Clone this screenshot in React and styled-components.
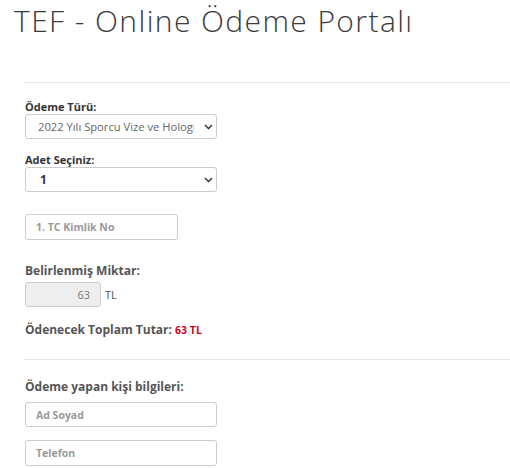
import React from "react";
import styled, { createGlobalStyle } from "styled-components";

const GlobalStyle = createGlobalStyle`
  body {
    margin: 0;
    background: #fff;
    font-family: "Open Sans", "Liberation Sans", sans-serif;
    color: #555;
  }
`;

const ChevronIcon = () => (
  <svg width="9" height="6" viewBox="0 0 9 6">
    <path d="M1 1l3.5 3.5L8 1" fill="none" stroke="#444" strokeWidth="1.6" />
  </svg>
);

const App = () => {
  return (
    <Page>
      <GlobalStyle />
      <Title>TEF - Online Ödeme Portalı</Title>
      <Form>
        <Divider />
        <Field $top={16}>
          <Label>Ödeme Türü:</Label>
          <SelectWrap $width={192}>
            <Select defaultValue="vize">
              <option value="vize">2022 Yılı Sporcu Vize ve Hologram Bedeli</option>
            </Select>
            <Chevron><ChevronIcon /></Chevron>
          </SelectWrap>
        </Field>
        <Field $top={13}>
          <Label>Adet Seçiniz:</Label>
          <SelectWrap $width={192}>
            <Select defaultValue="1" $bold>
              <option value="1">1</option>
            </Select>
            <Chevron><ChevronIcon /></Chevron>
          </SelectWrap>
        </Field>
        <Input $width={153} $top={22} placeholder="1. TC Kimlik No" />
        <Field $top={23}>
          <Label $big>Belirlenmiş Miktar:</Label>
          <AmountRow>
            <Amount readOnly value="63" />
            <Unit>TL</Unit>
          </AmountRow>
        </Field>
        <Total>
          Ödenecek Toplam Tutar: <Red>63 TL</Red>
        </Total>
        <Divider />
        <Label $big $top={19}>Ödeme yapan kişi bilgileri:</Label>
        <Stack>
          <Input $width={192} $height={25} placeholder="Ad Soyad" />
          <Input $width={192} placeholder="Telefon" />
        </Stack>
      </Form>
    </Page>
  );
};

const Page = styled.div`
  width: 510px;
  height: 468px;
  overflow: hidden;
`;

const Title = styled.h1`
  margin: 0;
  padding: 4px 0 0 14px;
  font-family: "Open Sans", sans-serif;
  font-weight: 300;
  font-size: 30px;
  line-height: 34px;
  letter-spacing: 1.4px;
  color: #3a3a3a;
`;

const Form = styled.div`
  display: flex;
  flex-direction: column;
  align-items: flex-start;
  padding: 44px 0 0 25px;
`;

const Divider = styled.hr`
  align-self: stretch;
  margin: 0 0 0 -1px;
  border: 0;
  border-top: 1px solid #e6e6e6;
  height: 0;
`;

const Field = styled.div`
  display: flex;
  flex-direction: column;
  margin-top: ${({ $top }) => $top || 0}px;
`;

const Label = styled.label`
  margin-top: ${({ $top }) => $top || 0}px;
  font-size: ${({ $big }) => ($big ? "12px" : "11px")};
  font-weight: 700;
  line-height: ${({ $big }) => ($big ? "16px" : "15px")};
  color: ${({ $big }) => ($big ? "#555" : "#333")};
`;

const SelectWrap = styled.div`
  position: relative;
  width: ${({ $width }) => $width}px;
`;

const Select = styled.select`
  appearance: none;
  width: 100%;
  height: 25px;
  padding: 0 22px 0 ${({ $bold }) => ($bold ? "14px" : "12px")};
  border: 1px solid #ccc;
  border-radius: 3px;
  background: #fff;
  font-family: "Open Sans", sans-serif;
  font-size: ${({ $bold }) => ($bold ? "12px" : "11.2px")};
  font-weight: ${({ $bold }) => ($bold ? 700 : 400)};
  color: ${({ $bold }) => ($bold ? "#333" : "#666")};
  outline: none;
`;

const Chevron = styled.span`
  position: absolute;
  right: 4px;
  top: 10px;
  display: flex;
  pointer-events: none;
`;

const Input = styled.input`
  box-sizing: border-box;
  width: ${({ $width }) => $width}px;
  height: ${({ $height }) => $height || 26}px;
  margin-top: ${({ $top }) => $top || 0}px;
  padding: 0 10px;
  border: 1px solid #ccc;
  border-radius: 3px;
  font-family: "Open Sans", sans-serif;
  font-size: 10.5px;
  font-weight: 700;
  color: #555;
  outline: none;
  &::placeholder {
    color: #999;
  }
`;

const AmountRow = styled.div`
  display: flex;
  align-items: center;
  gap: 4px;
  margin-top: 3px;
`;

const Amount = styled.input`
  box-sizing: border-box;
  width: 76px;
  height: 25px;
  padding: 0 10px;
  border: 1px solid #ccc;
  border-radius: 3px;
  background: #eee;
  text-align: right;
  font-family: "Open Sans", sans-serif;
  font-size: 11px;
  color: #777;
  outline: none;
`;

const Unit = styled.span`
  font-size: 11px;
  color: #555;
`;

const Total = styled.p`
  margin: 15px 0 21px;
  font-size: 12px;
  font-weight: 700;
  line-height: 16px;
  color: #555;
`;

const Red = styled.span`
  color: #d0021b;
  font-size: 10.5px;
`;

const Stack = styled.div`
  display: flex;
  flex-direction: column;
  gap: 13px;
  margin-top: 7px;
`;

export default App;
